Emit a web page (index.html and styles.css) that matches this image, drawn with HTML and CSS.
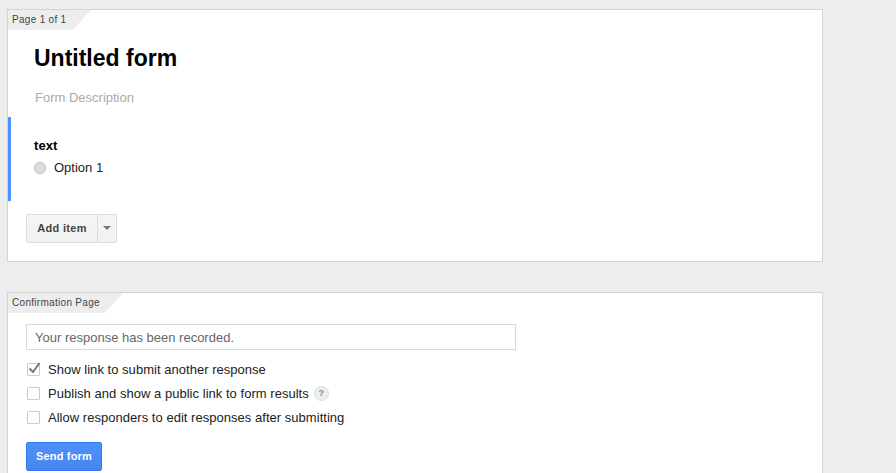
FILE: index.html
```html
<!DOCTYPE html>
<html lang="en">
<head>
    <meta charset="UTF-8">
    <meta name="viewport" content="width=device-width, initial-scale=1.0">
    <title>Untitled form</title>
    <link rel="stylesheet" href="styles.css">
</head>
<body>
    <div class="page">
        <section class="card">
            <div class="tab tab-page">Page 1 of 1</div>
            <div class="form-head">
                <h1>Untitled form</h1>
                <p class="description">Form Description</p>
            </div>
            <div class="question">
                <div class="question-title">text</div>
                <div class="option">
                    <span class="radio"></span>
                    <span>Option 1</span>
                </div>
            </div>
            <div class="add-item">
                <button class="add-main" type="button">Add item</button>
                <button class="add-arrow" type="button" aria-label="More"><span class="caret"></span></button>
            </div>
        </section>

        <section class="card card-confirm">
            <div class="tab tab-confirm">Confirmation Page</div>
            <div class="confirm-body">
                <input class="response" type="text" value="Your response has been recorded.">
                <div class="checks">
                    <label class="check">
                        <span class="box">
                            <svg width="15" height="15" viewBox="0 0 15 15"><path d="M2.5 7.5L6 11L12.5 2" fill="none" stroke="#777" stroke-width="2"/></svg>
                        </span>
                        Show link to submit another response
                    </label>
                    <label class="check">
                        <span class="box"></span>
                        Publish and show a public link to form results
                        <span class="help">?</span>
                    </label>
                    <label class="check">
                        <span class="box"></span>
                        Allow responders to edit responses after submitting
                    </label>
                </div>
                <button class="send" type="button">Send form</button>
            </div>
        </section>
    </div>
</body>
</html>
```

FILE: styles.css
```css
html, body {
    margin: 0;
    padding: 0;
    height: 100%;
    overflow: hidden;
}

body {
    font-family: 'Liberation Sans', Arial, sans-serif;
    background-color: #ededed;
    color: #000;
}

.page {
    width: 816px;
    margin-left: 7px;
    padding-top: 9px;
    display: flex;
    flex-direction: column;
    gap: 30px;
}

.card {
    background-color: white;
    border: 1px solid #d3d3d3;
    height: 251px;
}

.card-confirm {
    height: 300px;
}

.tab {
    height: 20px;
    line-height: 20px;
    padding-left: 4px;
    font-size: 10px;
    letter-spacing: 0.3px;
    color: #444;
    background-color: #ededed;
    box-sizing: border-box;
}

.tab-page {
    width: 83px;
    clip-path: polygon(0 0, 100% 0, 78% 100%, 0 100%);
}

.tab-confirm {
    width: 115px;
    clip-path: polygon(0 0, 100% 0, 84% 100%, 0 100%);
}

.form-head {
    padding: 13px 0 0 26px;
    height: 61px;
}

h1 {
    font-size: 23px;
    font-weight: bold;
    line-height: 30px;
    margin: 0;
}

.description {
    font-size: 13px;
    line-height: 16px;
    color: #aaa;
    margin: 17px 0 0 1px;
}

.question {
    border-left: 3px solid #4d90fe;
    height: 84px;
    padding: 21px 0 0 23px;
    box-sizing: border-box;
    margin-top: 13px;
}

.question-title {
    font-size: 13px;
    font-weight: bold;
    line-height: 16px;
    letter-spacing: 0.1px;
}

.option {
    display: flex;
    align-items: center;
    gap: 8px;
    font-size: 13px;
    line-height: 16px;
    margin-top: 6px;
    color: #222;
}

.radio {
    width: 10px;
    height: 10px;
    border: 1px solid #bbb;
    border-radius: 50%;
    background-color: #ddd;
}

.add-item {
    display: flex;
    margin: 13px 0 0 18px;
}

.add-item button {
    height: 29px;
    border: 1px solid #dcdcdc;
    background: linear-gradient(#f5f5f5, #f1f1f1);
    font-family: 'Liberation Sans', Arial, sans-serif;
    font-size: 11px;
    font-weight: bold;
    letter-spacing: 0.3px;
    color: #444;
    padding: 0 0 1px;
    border-radius: 2px;
}

.add-main {
    width: 72px;
    border-radius: 2px 0 0 2px;
}

.add-item .add-arrow {
    width: 20px;
    margin-left: -1px;
    border-radius: 0 2px 2px 0;
    display: flex;
    align-items: center;
    justify-content: center;
}

.caret {
    width: 0;
    height: 0;
    border-left: 4px solid transparent;
    border-right: 4px solid transparent;
    border-top: 4px solid #777;
}

.confirm-body {
    padding: 11px 0 0 18px;
}

.response {
    display: block;
    width: 490px;
    height: 26px;
    box-sizing: border-box;
    border: 1px solid #d9d9d9;
    padding: 0 8px;
    font-family: 'Liberation Sans', Arial, sans-serif;
    font-size: 13px;
    color: #666;
    outline: none;
}

.checks {
    display: flex;
    flex-direction: column;
    gap: 8px;
    margin-top: 11px;
}

.check {
    display: flex;
    align-items: center;
    height: 16px;
    font-size: 13px;
    letter-spacing: 0.03px;
    color: #222;
}

.box {
    position: relative;
    flex: none;
    width: 11px;
    height: 11px;
    border: 1px solid #ccc;
    margin: 0 8px 0 1px;
    border-radius: 1px;
}

.box svg {
    position: absolute;
    left: -1px;
    top: -3px;
}

.help {
    width: 13px;
    height: 13px;
    margin-left: 5px;
    border: 1px solid #ddd;
    border-radius: 50%;
    background-color: #eee;
    color: #888;
    font-size: 9px;
    font-weight: bold;
    line-height: 13px;
    text-align: center;
}

.send {
    display: block;
    width: 76px;
    height: 29px;
    margin-top: 17px;
    padding: 0 0 1px;
    border: 1px solid #3079ed;
    border-radius: 2px;
    background: linear-gradient(#4d90fe, #4787ed);
    color: white;
    font-family: 'Liberation Sans', Arial, sans-serif;
    font-size: 11px;
    font-weight: bold;
    letter-spacing: 0.2px;
}
```
